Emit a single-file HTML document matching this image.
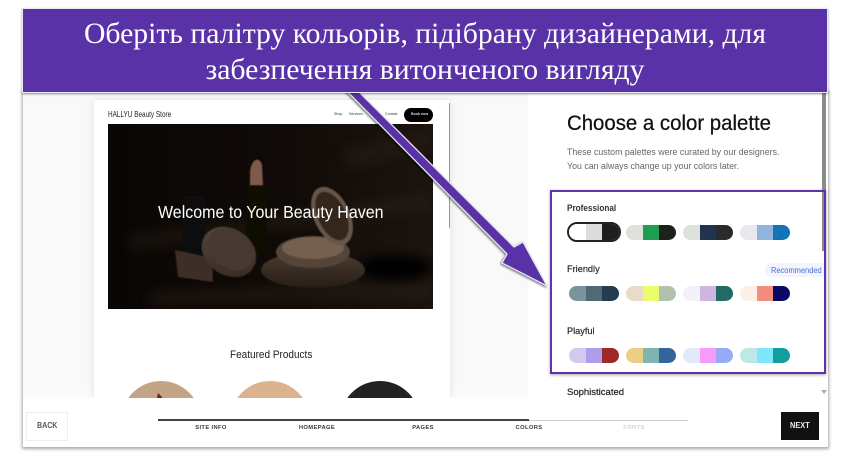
<!DOCTYPE html>
<html>
<head>
<meta charset="utf-8">
<style>
html,body{margin:0;padding:0;background:#fff;}
body{width:850px;height:456px;position:relative;overflow:hidden;font-family:"Liberation Sans",sans-serif;}
.a{position:absolute;}
.t{position:absolute;white-space:nowrap;transform-origin:0 50%;}
.pill{position:absolute;width:50px;height:15px;border-radius:8px;overflow:hidden;display:flex;}
.pill i{flex:1;display:block;}
.lab{position:absolute;top:425px;width:80px;text-align:center;font-size:5.8px;line-height:7px;font-weight:bold;letter-spacing:.35px;color:#3a3a3a;}
</style>
</head>
<body>
<!-- screenshot card -->
<div class="a" style="left:23px;top:90px;width:805px;height:357px;background:#fff;box-shadow:0 1px 3px 1px rgba(0,0,0,.35);"></div>
<!-- left pane -->
<div class="a" style="left:23px;top:90px;width:505px;height:308px;background:#f9f9f9;"></div>
<div class="a" style="left:23px;top:380px;width:805px;height:18px;background:linear-gradient(rgba(255,255,255,0),rgba(255,255,255,.6));"></div>
<!-- preview -->
<div class="a" style="left:94px;top:100px;width:356px;height:298px;background:#fff;overflow:hidden;box-shadow:0 0 8px rgba(0,0,0,.1);">
  <div class="t" style="left:14px;top:10px;font-size:8px;color:#222;line-height:10px;transform:scaleX(.8);">HALLYU Beauty Store</div>
  <div class="t" style="left:240px;top:12px;font-size:3.6px;color:#333;">Shop</div>
  <div class="t" style="left:255px;top:12px;font-size:3.6px;color:#333;">Services</div>
  <div class="t" style="left:291px;top:12px;font-size:3.6px;color:#333;">Contact</div>
  <div class="a" style="left:310px;top:8px;width:29px;height:14px;border-radius:7px;background:#000;"></div>
  <div class="t" style="left:317px;top:12px;font-size:3.6px;color:#ddd;font-weight:bold;">Book now</div>
  <div class="a" style="left:14px;top:24px;width:325px;height:185px;overflow:hidden;background:#0b0604;">
    <svg width="325" height="185" viewBox="108 124 325 185" style="position:absolute;left:0;top:0;">
      <defs>
        <filter id="b" x="-30%" y="-30%" width="160%" height="160%"><feGaussianBlur stdDeviation=".6"/></filter>
        <filter id="b2" x="-50%" y="-50%" width="200%" height="200%"><feGaussianBlur stdDeviation="6"/></filter>
        <linearGradient id="fl" x1="0" y1="0" x2="1" y2="0"><stop offset="0" stop-color="#0a0604"/><stop offset=".5" stop-color="#0f0a07"/><stop offset="1" stop-color="#1c140f"/></linearGradient>
        <linearGradient id="cp" x1="0" y1="0" x2="1" y2="1"><stop offset="0" stop-color="#5a4b40"/><stop offset="1" stop-color="#33281f"/></linearGradient>
        <linearGradient id="st" x1="0" y1="0" x2="0" y2="1"><stop offset="0" stop-color="#4c3d32"/><stop offset="1" stop-color="#271d17"/></linearGradient>
      </defs>
      <rect x="108" y="124" width="325" height="185" fill="url(#fl)"/>
      <g filter="url(#b2)" opacity=".4">
        <path d="M130 235L430 195V208L130 250Z" fill="#33271e"/>
        <path d="M340 150L433 130V145L350 170Z" fill="#2e2219"/>
        <path d="M150 292L430 280V295L150 305Z" fill="#33281f"/>
      </g>
      <ellipse cx="395" cy="268" rx="38" ry="13" fill="#060403" filter="url(#b2)"/>
      <g filter="url(#b)">
        <rect x="182" y="196" width="23" height="60" fill="#0c0a09"/>
        <path d="M175 250L212 258L213 282L178 277Z" fill="#3d2f25"/>
        <path d="M250 172C251 160 259 155 262 165L263 186H250Z" fill="#7f5a4c"/>
        <rect x="246" y="185" width="21" height="68" fill="#090706"/>
        <ellipse cx="313" cy="270" rx="52" ry="18" fill="url(#st)"/>
        <ellipse cx="313" cy="252" rx="37" ry="16" fill="#554538"/>
        <ellipse cx="313" cy="248" rx="31" ry="11" fill="#75604f"/>
        <ellipse cx="332" cy="216" rx="18" ry="31" transform="rotate(-25 332 216)" fill="#66574a"/>
        <ellipse cx="332" cy="216" rx="14" ry="26" transform="rotate(-25 332 216)" fill="#34281f"/>
        <ellipse cx="229" cy="252" rx="29" ry="23" transform="rotate(35 229 252)" fill="url(#cp)"/>
        <ellipse cx="231" cy="249" rx="25" ry="19" transform="rotate(35 231 249)" fill="#463930"/>
      </g>
    </svg>
    <div class="t" style="left:50px;top:78px;font-size:17.5px;line-height:20px;color:#fff;transform:scaleX(.914);">Welcome to Your Beauty Haven</div>
  </div>
  <div class="t" style="left:136px;top:248px;font-size:11px;line-height:14px;color:#222;transform:scaleX(.91);">Featured Products</div>
  <div class="a" style="left:27px;top:281px;width:80px;height:80px;border-radius:50%;background:#c4a487;"></div>
  <div class="a" style="left:136px;top:281px;width:80px;height:80px;border-radius:50%;background:#dcb38f;"></div>
  <div class="a" style="left:246px;top:281px;width:80px;height:80px;border-radius:50%;background:#222;"></div>
  <svg class="a" style="left:62px;top:292px;" width="8" height="7"><path d="M2 1L6 5V6H1Z" fill="#7d2020"/></svg>
</div>
<div class="a" style="left:449px;top:103px;width:1px;height:125px;background:#999;"></div>
<!-- right pane -->
<div class="t" style="left:567px;top:109px;font-size:21.7px;line-height:27px;color:#111;-webkit-text-stroke:.25px #111;transform:scaleX(.94);">Choose a color palette</div>
<div class="t" style="left:567px;top:146px;font-size:9.6px;line-height:14px;color:#666;transform:scaleX(.92);">These custom palettes were curated by our designers.<br>You can always change up your colors later.</div>
<div class="a" style="left:822px;top:93px;width:4px;height:158px;background:#8c8c8c;"></div>
<div class="t" style="left:567px;top:202px;font-size:9px;line-height:12px;font-weight:bold;color:#333;transform:scaleX(.91);">Professional</div>
<div class="t" style="left:567px;top:263px;font-size:9.2px;line-height:12px;color:#222;-webkit-text-stroke:.15px #222;">Friendly</div>
<div class="t" style="left:567px;top:325px;font-size:9.2px;line-height:12px;color:#222;-webkit-text-stroke:.15px #222;">Playful</div>
<div class="a" style="left:765px;top:263px;width:59px;height:14px;border-radius:7px 0 0 7px;background:#f3f4fd;"></div>
<div class="t" style="left:771px;top:264px;font-size:8.7px;line-height:12px;color:#4572cf;transform:scaleX(.86);">Recommended</div>
<div class="t" style="left:567px;top:387px;font-size:9.5px;line-height:12px;color:#222;-webkit-text-stroke:.2px #222;">Sophisticated</div>
<div class="a" style="left:821px;top:390px;width:0;height:0;border-left:3px solid transparent;border-right:3px solid transparent;border-top:4px solid #aaa;"></div>
<!-- pills -->
<div class="a" style="left:567px;top:222px;width:50px;height:16px;border:2px solid #222;border-radius:11px;background:#fff;"></div>
<div class="pill" style="left:569px;top:224px;height:16px;"><i style="background:#fff"></i><i style="background:#dcdcdc"></i><i style="background:#1e1e1e"></i></div>
<div class="pill" style="left:626px;top:225px;"><i style="background:#dfdfdb"></i><i style="background:#1f9e50"></i><i style="background:#1c211c"></i></div>
<div class="pill" style="left:683px;top:225px;"><i style="background:#dfe1dc"></i><i style="background:#223352"></i><i style="background:#2b2b2d"></i></div>
<div class="pill" style="left:740px;top:225px;"><i style="background:#e8e9ee"></i><i style="background:#8fb5dc"></i><i style="background:#1273b5"></i></div>
<div class="pill" style="left:569px;top:286px;"><i style="background:#7b949c"></i><i style="background:#516875"></i><i style="background:#223c50"></i></div>
<div class="pill" style="left:626px;top:286px;"><i style="background:#e8dcc8"></i><i style="background:#ecfd6c"></i><i style="background:#aec2ad"></i></div>
<div class="pill" style="left:683px;top:286px;"><i style="background:#f5f1fb"></i><i style="background:#cfb5e3"></i><i style="background:#226a66"></i></div>
<div class="pill" style="left:740px;top:286px;"><i style="background:#fdf0e6"></i><i style="background:#f48d7e"></i><i style="background:#0a0a66"></i></div>
<div class="pill" style="left:569px;top:348px;"><i style="background:#d2c8f0"></i><i style="background:#ae9dec"></i><i style="background:#9c2828"></i></div>
<div class="pill" style="left:626px;top:348px;"><i style="background:#ebd083"></i><i style="background:#7eb5b0"></i><i style="background:#33659c"></i></div>
<div class="pill" style="left:683px;top:348px;"><i style="background:#e3e8fb"></i><i style="background:#f49cf8"></i><i style="background:#97aaf6"></i></div>
<div class="pill" style="left:740px;top:348px;"><i style="background:#bde8e6"></i><i style="background:#7de6fd"></i><i style="background:#129e9c"></i></div>
<!-- highlight -->
<div class="a" style="left:550px;top:190px;width:272px;height:180px;border:2px solid #5d34ad;box-shadow:0 1px 3px rgba(0,0,0,.35);"></div>
<!-- bottom bar -->
<div class="a" style="left:23px;top:398px;width:805px;height:49px;background:#fff;"></div>
<div class="a" style="left:26px;top:412px;width:40px;height:27px;border:1px solid #eee;"></div>
<div class="t" style="left:37px;top:420px;font-size:8.5px;line-height:11px;font-weight:bold;color:#555;transform:scaleX(.83);">BACK</div>
<div class="a" style="left:158px;top:419px;width:371px;height:2px;background:#444;"></div>
<div class="a" style="left:529px;top:419.5px;width:159px;height:1.5px;background:#ccc;"></div>
<div class="lab" style="left:171px;">SITE INFO</div>
<div class="lab" style="left:277px;">HOMEPAGE</div>
<div class="lab" style="left:383px;">PAGES</div>
<div class="lab" style="left:489px;">COLORS</div>
<div class="lab" style="left:594px;color:#d2d2d2;">FONTS</div>
<div class="a" style="left:781px;top:412px;width:38px;height:28px;background:#111;"></div>
<div class="t" style="left:790px;top:420px;font-size:8.5px;line-height:11px;font-weight:bold;color:#eee;transform:scaleX(.87);">NEXT</div>
<!-- arrow -->
<svg class="a" style="left:0;top:0;filter:drop-shadow(-1px 1px 1px rgba(0,0,0,.55));" width="850" height="456">
  <path d="M329 73L340 73L514 247L523 242L547 286L502 263L507 254Z" fill="#5a32a8" stroke="#e6e6ee" stroke-width="1.3" stroke-linejoin="round"/>
</svg>
<!-- banner -->
<div class="a" style="left:22px;top:8px;width:804px;height:83px;background:#5a32a8;border:1px solid #eceaf5;box-shadow:0 1px 2px rgba(0,0,0,.45);"></div>
<div class="a" style="left:22px;top:16px;width:806px;text-align:center;font-family:'Liberation Serif',serif;font-size:29.7px;line-height:36px;color:#fff;white-space:nowrap;">Оберіть палітру кольорів, підібрану дизайнерами, для<br>забезпечення витонченого вигляду</div>
</body>
</html>
